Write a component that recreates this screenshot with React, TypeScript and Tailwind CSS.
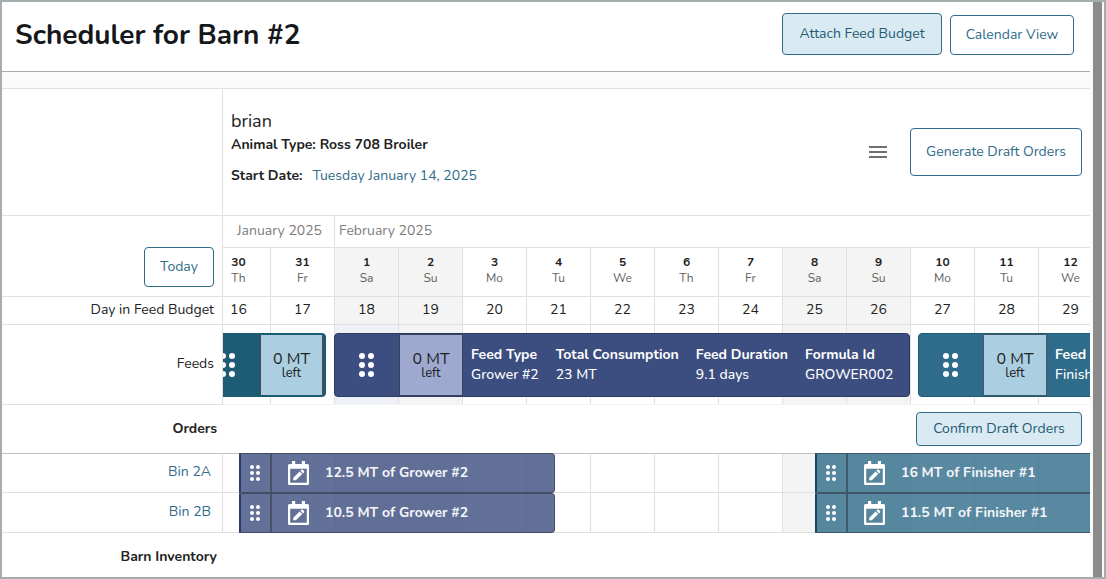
import React from "react";

type Tone = "teal" | "navy" | "blue";

const FONT = "font-['Nunito','Lato',sans-serif]";

const days = [
  { n: 30, d: "Th", b: 16 },
  { n: 31, d: "Fr", b: 17 },
  { n: 1, d: "Sa", b: 18 },
  { n: 2, d: "Su", b: 19 },
  { n: 3, d: "Mo", b: 20 },
  { n: 4, d: "Tu", b: 21 },
  { n: 5, d: "We", b: 22 },
  { n: 6, d: "Th", b: 23 },
  { n: 7, d: "Fr", b: 24 },
  { n: 8, d: "Sa", b: 25 },
  { n: 9, d: "Su", b: 26 },
  { n: 10, d: "Mo", b: 27 },
  { n: 11, d: "Tu", b: 28 },
  { n: 12, d: "We", b: 29 },
];

const isWeekend = (d: string) => d === "Sa" || d === "Su";

function DayCells({
  render,
  highlight,
}: {
  render?: (day: (typeof days)[number]) => React.ReactNode;
  highlight?: number;
}) {
  return (
    <div className="-ml-4 flex h-full">
      {days.map((day) => (
        <div
          key={`${day.n}-${day.b}`}
          className={`w-16 shrink-0 border-r border-[#e0e0e0] text-center ${
            day.n === highlight ? "bg-[#eef2f6]" : isWeekend(day.d) ? "bg-[#f4f4f4]" : ""
          }`}
        >
          {render?.(day)}
        </div>
      ))}
    </div>
  );
}

function Row({
  label,
  labelClass = "",
  height,
  children,
}: {
  label?: React.ReactNode;
  labelClass?: string;
  height: string;
  children?: React.ReactNode;
}) {
  return (
    <div className={`flex ${height}`}>
      <div
        className={`flex w-[221px] shrink-0 items-center justify-end border-r border-b border-[#e0e0e0] pr-2 ${labelClass}`}
      >
        {label}
      </div>
      <div className="grid min-w-0 flex-1 overflow-hidden">{children}</div>
    </div>
  );
}

function Dots({ className }: { className: string }) {
  return (
    <svg viewBox="0 0 15 24" className={className} fill="#fff" aria-hidden="true">
      {[3, 12, 21].map((y) => (
        <g key={y}>
          <circle cx="3" cy={y} r="3" />
          <circle cx="12" cy={y} r="3" />
        </g>
      ))}
    </svg>
  );
}

function CalendarEdit() {
  return (
    <svg viewBox="0 0 21 24" className="h-6 w-[21px] shrink-0" aria-hidden="true">
      <path
        fill="#fff"
        fillRule="evenodd"
        d="M4 0h3.2v3h6.6V0H17v3h2.5Q21 3 21 4.500V22.500Q21 24 19.500 24h-18Q0 24 0 22.500v-18Q0 3 1.500 3H4zM2.200 7.800v14h16.600v-14z"
      />
      <path
        fill="#fff"
        d="M5.300 19.300v-2.600l6.300-6.200 2.600 2.600-6.300 6.200zM12.400 9.800l1-1q.7-.6 1.400 0l1.200 1.200q.6.700 0 1.400l-1 1z"
      />
    </svg>
  );
}

const feedTones: Record<Tone, { bar: string; box: string }> = {
  teal: {
    bar: "bg-[#1e5b74] border-[#1b5a74]",
    box: "w-[63px] bg-[#abcee1] border-l-[#4b4b4b] border-y-[#1e5b74] border-r-[#4b4b4b]",
  },
  navy: { bar: "bg-[#3c4d80] border-[#2c3a66]", box: "w-16 bg-[#9da9cf] border-[#3b4258]" },
  blue: { bar: "bg-[#2f6b8a] border-[#1f5b76]", box: "w-16 bg-[#abcee1] border-[#3c5a6a]" },
};

function FeedBar({
  tone,
  width,
  facts = [],
}: {
  tone: Tone;
  width: string;
  facts?: [string, string][];
}) {
  const t = feedTones[tone];
  return (
    <div className={`flex h-16 shrink-0 overflow-hidden rounded border ${t.bar} ${width}`}>
      <div className="flex w-16 shrink-0 items-center justify-center pr-[2px]">
        <Dots className="h-6 w-[15px]" />
      </div>
      <div
        className={`flex shrink-0 flex-col items-center justify-center border text-[#222] ${t.box}`}
      >
        <div className="text-base leading-4">0 MT</div>
        <div className="text-[13px] leading-3">left</div>
      </div>
      {facts.length > 0 && (
        <div className="flex items-center gap-[17px] px-2 text-sm leading-5 whitespace-nowrap text-white">
          {facts.map(([name, value]) => (
            <div key={name}>
              <div className="font-bold">{name}</div>
              <div className="font-medium">{value}</div>
            </div>
          ))}
        </div>
      )}
    </div>
  );
}

function OrderBar({ tone, width, text }: { tone: "navy" | "blue"; width: string; text: string }) {
  const bar =
    tone === "navy"
      ? "bg-[#3c4d80]/80 border-[#454c66] border-l-[#283a70]"
      : "bg-[#2f6b8a]/80 border-[#3c5868] border-l-[#12475f]";
  const line = tone === "navy" ? "border-[#4a5068]" : "border-[#3f5a6a]";
  return (
    <div className={`flex h-10 items-center overflow-hidden rounded-r border border-l-2 ${bar} ${width}`}>
      <div className={`flex h-full w-[31px] shrink-0 items-center justify-center border-r-2 pr-[2px] ${line}`}>
        <Dots className="h-4 w-[10px]" />
      </div>
      <div className="flex items-center gap-4 pl-4 text-sm font-bold whitespace-nowrap text-[#f4f6fa]">
        <CalendarEdit />
        {text}
      </div>
    </div>
  );
}

function Button({ children, className }: { children: React.ReactNode; className: string }) {
  return (
    <button
      type="button"
      className={`rounded border border-[#2f6b8a] text-sm whitespace-nowrap ${className}`}
    >
      {children}
    </button>
  );
}

const bins = [
  {
    name: "Bin 2A",
    grower: "12.5 MT of Grower #2",
    finisher: "16 MT of Finisher #1",
    edge: "border-t border-t-[#c2c2c2]",
  },
  { name: "Bin 2B", grower: "10.5 MT of Grower #2", finisher: "11.5 MT of Finisher #1", edge: "" },
];

export default function App() {
  return (
    <div className={`flex min-h-screen border-2 border-[#a6adb0] bg-white text-sm text-[#222] ${FONT}`}>
      <main className="min-w-0 flex-1">
        <header className="flex h-[70px] items-start justify-between border-b border-[#a6aaa8] pt-[11px] pr-4 pl-[13px]">
          <h1 className="text-[28px] leading-[44px] font-bold text-[#15181a]">Scheduler for Barn #2</h1>
          <div className="flex items-end gap-2">
            <Button className="h-[42px] w-40 bg-[#d9eaf2] text-[#235b75]">Attach Feed Budget</Button>
            <Button className="h-10 w-[124px] bg-white text-[#2f6b8a]">Calendar View</Button>
          </div>
        </header>
        <div className="h-[17px] border-b border-[#e0e0e0] bg-[#fafafa]" />

        <Row height="h-[127px]">
          <div className="flex items-center justify-between border-b border-[#e0e0e0] pr-2 pl-2">
            <div className="pb-[10px]">
              <h2 className="text-lg leading-[27px]">brian</h2>
              <p className="leading-5 font-bold">Animal Type: Ross 708 Broiler</p>
              <p className="mt-[11px] flex gap-[10px] leading-5">
                <span className="font-bold">Start Date:</span>
                <a href="#start-date" className="text-[#2f6b8a]">
                  Tuesday January 14, 2025
                </a>
              </p>
            </div>
            <div className="flex items-center gap-[23px]">
              <button type="button" aria-label="Menu">
                <svg viewBox="0 0 18 12" className="h-3 w-[18px]" fill="#6f6f6f" aria-hidden="true">
                  <path d="M0 0h18v2H0zM0 5h18v2H0zM0 10h18v2H0z" />
                </svg>
              </button>
              <Button className="h-12 w-[172px] bg-white text-[#2f6b8a]">Generate Draft Orders</Button>
            </div>
          </div>
        </Row>

        <Row
          height="h-[81px]"
          labelClass="pt-[22px]"
          label={<Button className="h-10 w-[70px] bg-white text-[#2f6b8a]">Today</Button>}
        >
          <div className="flex flex-col border-b border-[#e0e0e0]">
            <div className="flex h-8 border-b border-[#e0e0e0] leading-[30px] text-[#7b7b7b]">
              <div className="w-28 shrink-0 border-r border-[#e0e0e0] pr-3 text-right">January 2025</div>
              <div className="pl-1">February 2025</div>
            </div>
            <div className="flex-1">
              <DayCells
                render={(day) => (
                  <div className="pt-[6px]">
                    <div className="text-xs leading-4 font-bold">{day.n}</div>
                    <div className="text-xs leading-4 text-[#616161]">{day.d}</div>
                  </div>
                )}
              />
            </div>
          </div>
        </Row>

        <Row height="h-7" label="Day in Feed Budget" labelClass="pb-[2px]">
          <div className="border-b border-[#e0e0e0]">
            <DayCells render={(day) => <div className="leading-[26px]">{day.b}</div>} />
          </div>
        </Row>

        <Row height="h-20" label="Feeds" labelClass="pb-[2px]">
          <div className="col-start-1 row-start-1 border-b border-[#f1f1f1]">
            <DayCells highlight={1} />
          </div>
          <div className="col-start-1 row-start-1 -ml-7 flex items-center gap-2">
            <FeedBar tone="teal" width="w-[131px]" />
            <FeedBar
              tone="navy"
              width="w-[576px]"
              facts={[
                ["Feed Type", "Grower #2"],
                ["Total Consumption", "23 MT"],
                ["Feed Duration", "9.1 days"],
                ["Formula Id", "GROWER002"],
              ]}
            />
            <FeedBar tone="blue" width="w-[576px]" facts={[["Feed Type", "Finisher #1"]]} />
          </div>
        </Row>

        <div className="flex h-12 items-center justify-between pr-2">
          <h3 className="w-[215px] text-right font-bold">Orders</h3>
          <Button className="h-[34px] w-[166px] bg-[#d9eaf2] text-[#235b75]">Confirm Draft Orders</Button>
        </div>

        <div>
          {bins.map((bin) => (
            <Row
              key={bin.name}
              height="h-10"
              labelClass={`pr-[11px] pb-[2px] ${bin.edge}`}
              label={
                <a href="#bin" className="text-[#2f6b8a]">
                  {bin.name}
                </a>
              }
            >
              <div className={`col-start-1 row-start-1 border-b border-[#e0e0e0] ${bin.edge}`}>
                <DayCells />
              </div>
              <div className="col-start-1 row-start-1 ml-4 flex gap-[260px]">
                <OrderBar tone="navy" width="w-[316px] shrink-0" text={bin.grower} />
                <OrderBar tone="blue" width="w-[600px] shrink-0" text={bin.finisher} />
              </div>
            </Row>
          ))}
        </div>

        <div className="flex h-[44px] items-center pt-1">
          <h3 className="w-[215px] text-right font-bold">Barn Inventory</h3>
        </div>
      </main>
      <div className="w-[14px] shrink-0 bg-[#fafafa] pr-[2px] pl-[3px]" aria-hidden="true">
        <div className="h-full bg-[#8b8b8b]" />
      </div>
    </div>
  );
}
